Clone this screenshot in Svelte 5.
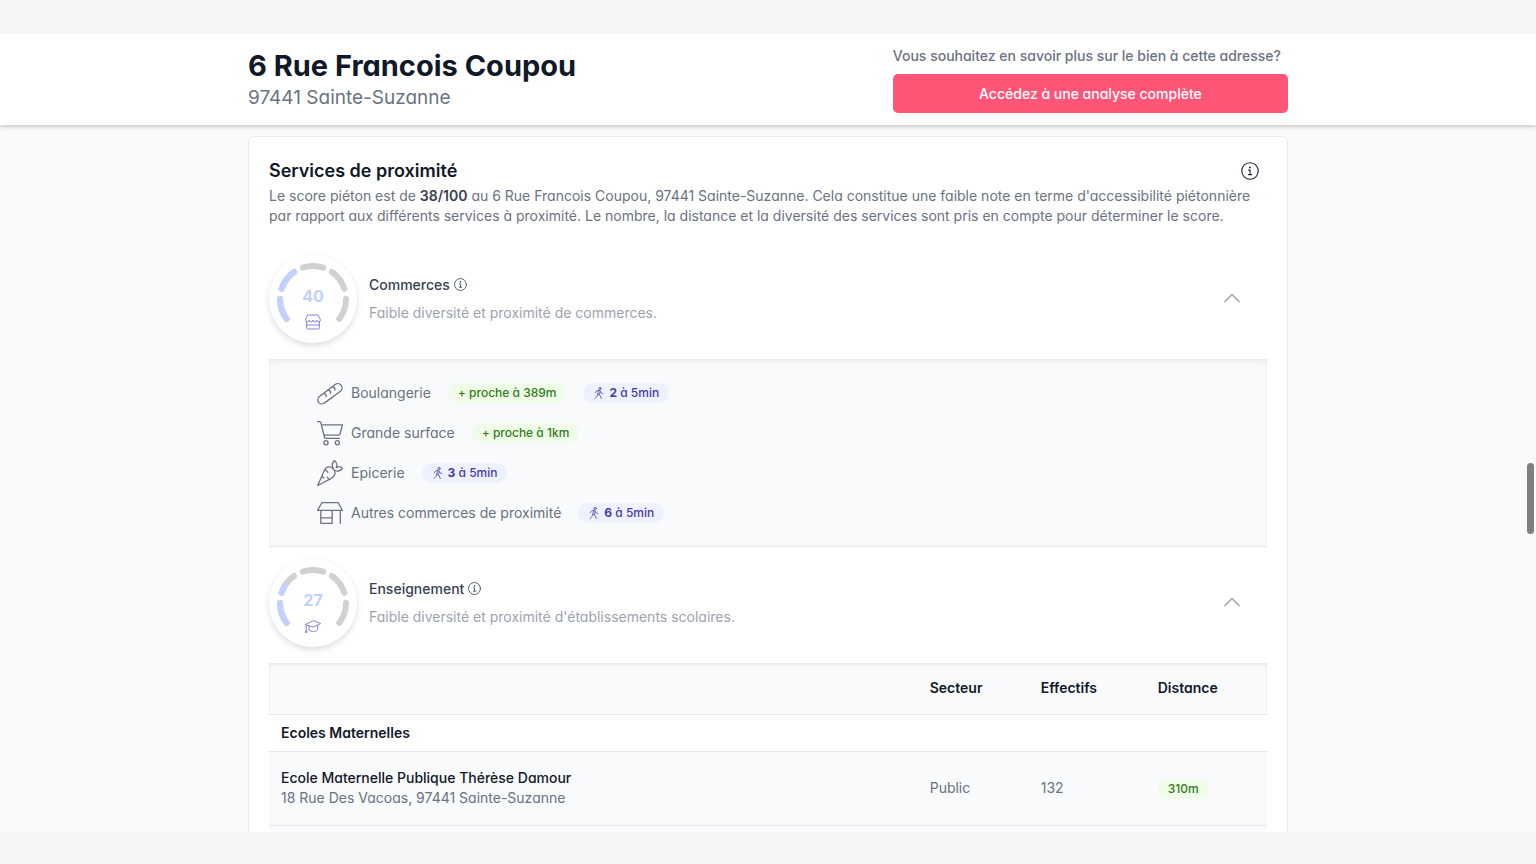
<script>
  const services = [
    { icon: 'bread', name: 'Boulangerie', near: '389m', count: 2 },
    { icon: 'cart', name: 'Grande surface', near: '1km', count: 0 },
    { icon: 'carrot', name: 'Epicerie', near: '', count: 3 },
    { icon: 'shop', name: 'Autres commerces de proximité', near: '', count: 6 }
  ];

  const segments = [[-127, -90], [-72, -35], [-18, 18], [35, 72], [90, 127]];

  function point(angle) {
    const a = (angle * Math.PI) / 180;
    return `${(44 + 33 * Math.sin(a)).toFixed(2)} ${(44 - 33 * Math.cos(a)).toFixed(2)}`;
  }

  function arc(from, to) {
    return `M${point(from)}A33 33 0 0 1 ${point(to)}`;
  }

  function filled(score) {
    return segments
      .map(([from, to], i) => {
        const part = Math.min(1, Math.max(0, (score - i * 20) / 20));
        return part > 0 ? arc(from, from + (to - from) * part) : '';
      })
      .filter(Boolean);
  }
</script>

{#snippet info()}
  <svg viewBox="0 0 24 24" class="line" aria-hidden="true">
    <circle cx="12" cy="12" r="11" />
    <path d="M9.8 16.8h4.600M12.100 16.800v-6h-2" />
    <circle cx="11.8" cy="7.2" r=".6" fill="currentColor" />
  </svg>
{/snippet}

{#snippet chevron()}
  <svg viewBox="0 0 18 18" class="chevron" aria-hidden="true">
    <path d="M1.500 12 9 4.500 16.500 12" />
  </svg>
{/snippet}

{#snippet gauge(score, kind)}
  <div class="gauge">
    <svg viewBox="0 0 88 88" class="dial" aria-hidden="true">
      {#each segments as [from, to]}
        <path d={arc(from, to)} stroke="#d1d1d3" />
      {/each}
      {#each filled(score) as d}
        <path {d} stroke="#c3d0fb" />
      {/each}
    </svg>
    <div class="score">
      <span>{score}</span>
      {#if kind === 'store'}
        <svg viewBox="0 0 24 24" class="line" aria-hidden="true">
          <path d="M4.500 1.500h15L23 8v1a2.750 2.750 0 0 1-5.500 0 2.750 2.750 0 0 1-5.500 0 2.750 2.750 0 0 1-5.500 0A2.750 2.750 0 0 1 1 9V8zM2.500 12v9.500a1 1 0 0 0 1 1h17a1 1 0 0 0 1-1V12M2.500 16.500h19" />
        </svg>
      {:else}
        <svg viewBox="0 0 24 24" class="line" aria-hidden="true">
          <path d="M1 9.500 13 4l10.500 4.500L13 13.500zM6 12v6c4 3 9 3 13 0v-6.500M1.800 10v8M.5 21l1.300-3 1.300 3z" />
        </svg>
      {/if}
    </div>
  </div>
{/snippet}

<div class="page">
  <div class="frame">
    <header>
      <div class="wrap head">
        <div>
          <h1>6 Rue Francois Coupou</h1>
          <p class="city">97441 Sainte-Suzanne</p>
        </div>
        <div class="cta">
          <p>Vous souhaitez en savoir plus sur le bien à cette adresse?</p>
          <button type="button">Accédez à une analyse complète</button>
        </div>
      </div>
    </header>

    <main class="wrap">
      <section class="card">
        <div class="title">
          <h2>Services de proximité</h2>
          <button type="button" class="info big" aria-label="Informations">{@render info()}</button>
        </div>
        <p class="intro">
          Le score piéton est de <strong>38/100</strong> au 6 Rue Francois Coupou, 97441 Sainte-Suzanne.
          Cela constitue une faible note en terme d'accessibilité piétonnière par rapport aux différents
          services à proximité. Le nombre, la distance et la diversité des services sont pris en compte
          pour déterminer le score.
        </p>

        <div class="row">
          {@render gauge(40, 'store')}
          <div class="text">
            <h3>Commerces <button type="button" class="info" aria-label="Informations">{@render info()}</button></h3>
            <p>Faible diversité et proximité de commerces.</p>
          </div>
          <button type="button" class="toggle" aria-label="Replier Commerces">{@render chevron()}</button>
        </div>

        <ul class="panel">
          {#each services as s}
            <li>
              <svg viewBox="0 0 24 24" class="line kind" aria-hidden="true">
                {#if s.icon === 'bread'}
                  <path d="M2.200 15.300 16.800 4.100a4 4 0 0 1 5.600.8 4 4 0 0 1-.8 5.500L7.100 21.100a4 4 0 0 1-5.600-.5 3.800 3.800 0 0 1 .7-5.300zM6 12.500c2 .1 2.700 1 2.500 2.700M10 9.400c2 .1 2.700 1 2.500 2.700M14 6.400c2 .1 2.700 1 2.500 2.700" />
                {:else if s.icon === 'cart'}
                  <path d="M.5 1.500h1.800c.7 0 1.100.4 1.300 1l3.200 13.200c.2.800.7 1.300 1.600 1.300h12.100M4 4.500h19.500l-2.200 8.300c-.2.800-.7 1.200-1.500 1.200H6.500" />
                  <circle cx="8.300" cy="21" r="1.900" />
                  <circle cx="18.800" cy="21" r="1.900" />
                {:else if s.icon === 'carrot'}
                  <path d="M.7 23.500 6.700 9.700c1.600-3.700 5.200-4.500 8-1.900 3.300 3 2 7.500-1.500 9.200zM15 8c-1.700-3-.8-5.500 1-7.500 2.300 1.700 3 4 1.800 6.600 2.400-1.500 4.500-.9 5.700.6-1.600 2.600-5 3.500-8.100 1.300M7.500 9l2.500 2.300M11.500 18l-2.200-2.200M4.500 15l1.800 1.600" />
                {:else}
                  <path d="M4.500 2.500h15L23.500 9.500H.5zM3.500 9.500v12h10.500v-12M3.500 16.500h10.500M21.500 9.500v12" />
                {/if}
              </svg>
              <span class="name">{s.name}</span>
              {#if s.near}
                <span class="pill green">+ proche à {s.near}</span>
              {/if}
              {#if s.count}
                <span class="pill blue">
                  <svg viewBox="0 0 24 24" class="line" aria-hidden="true">
                    <circle cx="14" cy="3" r="2.300" />
                    <path d="M4.500 11.500 7 8l4.500-1.500c1.300-.4 2.500.4 2.900 1.500l1.300 3.500 4 1.500M11.500 7 9.500 14l4.800 3 2.200 6M14.500 9l-1.600 6M9.500 14.500 8 18.500l-4 4.500" />
                  </svg>
                  <span><b>{s.count}</b> à 5min</span>
                </span>
              {/if}
            </li>
          {/each}
        </ul>

        <div class="row">
          {@render gauge(27, 'school')}
          <div class="text">
            <h3>Enseignement <button type="button" class="info" aria-label="Informations">{@render info()}</button></h3>
            <p>Faible diversité et proximité d'établissements scolaires.</p>
          </div>
          <button type="button" class="toggle" aria-label="Replier Enseignement">{@render chevron()}</button>
        </div>

        <table>
          <colgroup><col class="c1" /><col class="c2" /><col class="c3" /><col /></colgroup>
          <thead>
            <tr><td></td><th scope="col">Secteur</th><th scope="col">Effectifs</th><th scope="col">Distance</th></tr>
          </thead>
          <tbody>
            <tr class="group"><th colspan="4" scope="colgroup">Ecoles Maternelles</th></tr>
            <tr class="school">
              <td><strong>Ecole Maternelle Publique Thérèse Damour</strong><br />18 Rue Des Vacoas, 97441 Sainte-Suzanne</td>
              <td>Public</td>
              <td>132</td>
              <td><span class="pill green">310m</span></td>
            </tr>
            <tr class="school"><td colspan="4"></td></tr>
          </tbody>
        </table>
      </section>
    </main>
    <div class="thumb"></div>
  </div>
</div>

<style>
  :global(body) {
    background: #f6f6f6;
  }
  .page {
    box-sizing: border-box;
    height: 100vh;
    padding: 34px 0 32px;
    font-family: Inter, 'Liberation Sans', sans-serif;
    font-feature-settings: 'cv11';
    font-size: 14px;
    line-height: 20px;
    color: #6b7280;
  }
  .frame {
    position: relative;
    height: 100%;
    overflow: hidden;
    background: #f9fafc;
  }
  h1, h2, h3, p, ul {
    margin: 0;
    padding: 0;
  }
  button {
    font: inherit;
    font-feature-settings: inherit;
    border: 0;
    background: none;
    padding: 0;
    color: inherit;
    cursor: pointer;
  }
  .wrap {
    max-width: 1040px;
    margin: 0 auto;
  }
  header {
    position: relative;
    background: #fff;
    box-shadow: 0 1px 5px rgba(0, 0, 0, 0.26);
  }
  .head {
    display: flex;
    justify-content: space-between;
    padding: 12px 0;
  }
  h1 {
    font-size: 29px;
    line-height: 40px;
    font-weight: 700;
    color: #111827;
  }
  .city {
    font-size: 19px;
    line-height: 24px;
  }
  .cta {
    display: flex;
    flex-direction: column;
    gap: 8px;
    width: 38%;
    font-weight: 500;
  }
  .cta button {
    height: 39px;
    border-radius: 5px;
    background: #ff5678;
    color: #fff;
  }
  main {
    padding-top: 11px;
  }
  .card {
    background: #fff;
    border: 1px solid #e8eaee;
    border-radius: 6px;
    padding: 20px;
  }
  .title {
    display: flex;
    align-items: center;
    justify-content: space-between;
    padding-right: 8px;
  }
  h2 {
    font-size: 18px;
    line-height: 28px;
    font-weight: 600;
    color: #111827;
  }
  .intro {
    padding-top: 1px;
  }
  .intro strong {
    color: #374151;
    font-weight: 600;
  }
  .line {
    fill: none;
    stroke: currentColor;
    stroke-width: 1.500;
    stroke-linecap: round;
    stroke-linejoin: round;
  }
  .info {
    display: inline-flex;
    vertical-align: -1px;
  }
  .info svg {
    width: 13px;
    height: 13px;
  }
  .info.big {
    color: #1f2937;
  }
  .info.big svg {
    width: 18px;
    height: 18px;
  }
  .row {
    display: flex;
    align-items: center;
    gap: 12px;
    padding: 12px 26px 16px 0;
  }
  .intro + .row {
    margin-top: 17px;
  }
  .gauge {
    display: grid;
    width: 88px;
    height: 88px;
    border-radius: 50%;
    box-shadow: 0 3px 6px rgba(0, 0, 0, 0.13);
  }
  .gauge > * {
    grid-area: 1 / 1;
  }
  .dial {
    fill: none;
    stroke-width: 6;
    stroke-linecap: round;
  }
  .score {
    display: flex;
    flex-direction: column;
    align-items: center;
    gap: 8px;
    padding-top: 31px;
    font-size: 16px;
    font-weight: 700;
    color: #c3d0fb;
  }
  .score svg {
    width: 16px;
    height: 16px;
    color: #8583dc;
  }
  .text {
    flex: 1;
  }
  h3 {
    font-size: 14px;
    line-height: 20px;
    font-weight: 500;
    color: #374151;
  }
  .text p {
    margin-top: 8px;
    color: #9ca3af;
  }
  .chevron {
    display: block;
    width: 18px;
    height: 18px;
    fill: none;
    stroke: #a3a3a3;
    stroke-width: 1.500;
  }
  .panel {
    list-style: none;
    padding: 13px 48px;
    border: 1px solid #e8eaee;
    border-width: 1px 0;
    background: #f9fafc;
    box-shadow: inset 0 2px 4px rgba(0, 0, 0, 0.05);
  }
  .panel li {
    display: flex;
    align-items: center;
    height: 40px;
  }
  .kind {
    width: 26px;
    height: 26px;
    margin-right: 8px;
    stroke-width: 1.200;
  }
  .pill {
    display: inline-flex;
    align-items: center;
    gap: 4px;
    border-radius: 10px;
    padding: 0 10px;
    font-size: 12px;
    line-height: 20px;
    font-weight: 500;
  }
  .panel .pill {
    margin-left: 17px;
  }
  .pill svg {
    width: 12px;
    height: 12px;
  }
  .pill b {
    font-weight: 700;
  }
  .green {
    background: #effde8;
    color: #357a18;
  }
  .blue {
    background: #edf2fe;
    color: #4a3aab;
  }
  table {
    width: 100%;
    table-layout: fixed;
    border-collapse: collapse;
    text-align: left;
  }
  .c1 {
    width: 65%;
  }
  .c2 {
    width: 111px;
  }
  .c3 {
    width: 117px;
  }
  th,
  td {
    padding: 0 12px;
    border-bottom: 1px solid #e5e7eb;
  }
  th {
    font-weight: 600;
    color: #111827;
  }
  thead tr {
    height: 51px;
    background: #f9fafc;
    box-shadow: inset 0 2px 3px rgba(0, 0, 0, 0.08);
  }
  .group {
    height: 37px;
  }
  .school {
    height: 74px;
    background: #f9fafc;
  }
  .school strong {
    font-weight: 500;
    color: #111827;
  }
  .thumb {
    position: absolute;
    top: 429px;
    right: 2px;
    width: 7px;
    height: 71px;
    border-radius: 4px;
    background: #7f7f7f;
  }
</style>
